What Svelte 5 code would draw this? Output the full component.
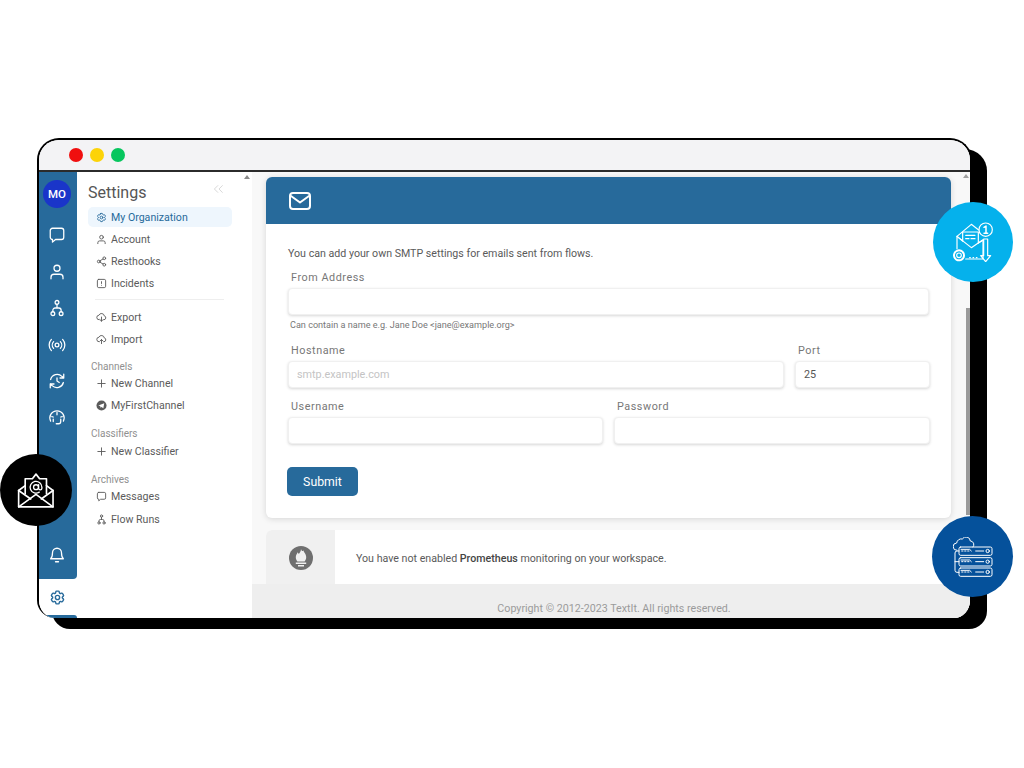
<script>
  const orgLinks = [
    { label: 'Account', icon: 'user' },
    { label: 'Resthooks', icon: 'share' },
    { label: 'Incidents', icon: 'alert' }
  ];
  const railIcons = ['chat', 'user', 'flow', 'signal', 'history', 'gauge'];
  const servers = [30, 62, 93];
</script>

{#snippet icon(name)}
  <svg viewBox="0 0 24 24" fill="none" stroke="currentColor" stroke-width="2" stroke-linecap="round" stroke-linejoin="round">
    {#if name === 'chat'}
      <path d="M6 3h12a3 3 0 0 1 3 3v9a3 3 0 0 1-3 3h-8l-4 3.500V18a3 3 0 0 1-3-3V6a3 3 0 0 1 3-3z" />
    {:else if name === 'user'}
      <circle cx="12" cy="7" r="4" /><path d="M4 21v-2a4 4 0 0 1 4-4h8a4 4 0 0 1 4 4v2" />
    {:else if name === 'flow'}
      <circle cx="12" cy="4.500" r="2.500" /><circle cx="6.500" cy="19.500" r="2.500" /><circle cx="17.500" cy="19.500" r="2.500" /><path d="M12 7v5M6.500 17v-2a3 3 0 0 1 3-3h5a3 3 0 0 1 3 3v2" />
    {:else if name === 'signal'}
      <circle cx="12" cy="12" r="2.500" /><path d="M16.500 7.500a6.500 6.500 0 0 1 0 9M7.500 16.500a6.500 6.500 0 0 1 0-9M19.500 4.500a11 11 0 0 1 0 15M4.500 19.500a11 11 0 0 1 0-15" />
    {:else if name === 'history'}
      <path d="M3.500 10A9 9 0 0 1 18.500 5.800L21 8M21 3v5h-5M20.500 14A9 9 0 0 1 5.500 18.200L3 16M3 21v-5h5" /><path d="M12 8v4l3 2" />
    {:else if name === 'gauge'}
      <path d="M3.500 17.500a9.500 9.500 0 1 1 17 0" /><path d="M12 6v3M7 12l-2-.5M17 12l2-.5M17 15v3a3 3 0 0 1-3 3h-3M7 15v3" />
    {:else if name === 'share'}
      <circle cx="18" cy="5" r="3" /><circle cx="6" cy="12" r="3" /><circle cx="18" cy="19" r="3" /><path d="M8.600 13.500l6.800 4M15.400 6.500l-6.800 4" />
    {:else if name === 'alert'}
      <rect x="3" y="3" width="18" height="18" rx="3" /><path d="M12 8v4M12 16h.01" />
    {:else if name === 'gear'}
      <path d="M9.594 3.940c.09-.542.56-.94 1.110-.94h2.593c.55 0 1.020.398 1.110.94l.213 1.281c.063.374.313.686.645.870.074.04.147.083.22.127.325.196.72.257 1.075.124l1.217-.456a1.125 1.125 0 0 1 1.370.49l1.296 2.247a1.125 1.125 0 0 1-.26 1.431l-1.003.827c-.293.241-.438.613-.43.992a7.723 7.723 0 0 1 0 .255c-.008.378.137.75.43.991l1.004.827c.424.35.534.955.26 1.430l-1.298 2.247a1.125 1.125 0 0 1-1.369.491l-1.217-.456c-.355-.133-.75-.072-1.076.124a6.470 6.470 0 0 1-.22.128c-.331.183-.581.495-.644.869l-.213 1.281c-.09.543-.56.94-1.110.94h-2.594c-.55 0-1.019-.398-1.110-.94l-.213-1.281c-.062-.374-.312-.686-.644-.870a6.520 6.520 0 0 1-.22-.127c-.325-.196-.72-.257-1.076-.124l-1.217.456a1.125 1.125 0 0 1-1.369-.49l-1.297-2.247a1.125 1.125 0 0 1 .26-1.431l1.004-.827c.292-.24.437-.613.43-.991a6.932 6.932 0 0 1 0-.255c.007-.38-.138-.751-.43-.992l-1.004-.827a1.125 1.125 0 0 1-.26-1.430l1.297-2.247a1.125 1.125 0 0 1 1.370-.491l1.216.456c.356.133.751.072 1.076-.124.072-.044.146-.086.22-.128.332-.183.582-.495.644-.869l.214-1.280z" /><circle cx="12" cy="12" r="3" />
    {:else if name === 'cloud-down'}
      <path d="M7 17a5 5 0 0 1-.5-10A6 6 0 0 1 18 8.500a4.300 4.300 0 0 1-1 8.500" /><path d="M12 11v9M8.500 16.500L12 20l3.500-3.500" />
    {:else if name === 'cloud-up'}
      <path d="M7 17a5 5 0 0 1-.5-10A6 6 0 0 1 18 8.500a4.300 4.300 0 0 1-1 8.500" /><path d="M12 21v-9M8.500 15.500L12 12l3.500 3.500" />
    {:else if name === 'plus'}
      <path d="M12 4v16M4 12h16" />
    {:else if name === 'bell'}
      <path d="M18 9a6 6 0 0 0-12 0c0 6-2.500 8-2.500 8h17S18 15 18 9z" /><path d="M10 21h4" />
    {:else if name === 'mail'}
      <rect x="2" y="4" width="20" height="16" rx="3" /><path d="M3 7l9 6.500L21 7" />
    {/if}
  </svg>
{/snippet}

{#snippet navItem(label, name)}
  <div class="nav-item">
    <span class="nav-icon">{@render icon(name)}</span>
    <span>{label}</span>
  </div>
{/snippet}

<div class="stage">
  <div class="frame">
    <div class="titlebar">
      <span class="dot red"></span>
      <span class="dot yellow"></span>
      <span class="dot green"></span>
    </div>

    <div class="body">
      <aside class="rail">
        <div class="rail-top">
          <div class="avatar">MO</div>
          {#each railIcons as name}
            <div class="rail-icon">{@render icon(name)}</div>
          {/each}
        </div>
        <div class="rail-bottom">
          <div class="rail-icon">{@render icon('bell')}</div>
        </div>
        <div class="rail-active">{@render icon('gear')}</div>
        <div class="rail-stub"></div>
      </aside>

      <nav class="menu">
        <div class="menu-head">
          <h1>Settings</h1>
          <span class="collapse">
            <svg viewBox="0 0 12 10" fill="none" stroke="currentColor" stroke-width="1">
              <path d="M5.500 1L1.500 5l4 4M10.500 1l-4 4 4 4" />
            </svg>
          </span>
        </div>
        <div class="nav-item selected">
          <span class="nav-icon">{@render icon('gear')}</span>
          <span>My Organization</span>
        </div>
        {#each orgLinks as link}
          {@render navItem(link.label, link.icon)}
        {/each}
        <div class="divider"></div>
        {@render navItem('Export', 'cloud-down')}
        {@render navItem('Import', 'cloud-up')}

        <div class="group first">Channels</div>
        {@render navItem('New Channel', 'plus')}
        <div class="nav-item">
          <span class="nav-icon">
            <svg viewBox="0 0 24 24">
              <circle cx="12" cy="12" r="11" fill="currentColor" />
              <path d="M5 12l13-5-2 11-4-3-2 2-1-4z" fill="#fff" />
            </svg>
          </span>
          <span>MyFirstChannel</span>
        </div>

        <div class="group">Classifiers</div>
        {@render navItem('New Classifier', 'plus')}

        <div class="group">Archives</div>
        {@render navItem('Messages', 'chat')}
        {@render navItem('Flow Runs', 'flow')}
      </nav>

      <div class="menu-track">
        <span class="track-arrow"></span>
      </div>

      <main class="content">
        <div class="scroll-area">
          <section class="card">
            <header class="card-head">
              <span class="head-icon">{@render icon('mail')}</span>
            </header>
            <form class="card-body">
              <p class="intro">You can add your own SMTP settings for emails sent from flows.</p>
              <div class="field">
                <label for="from">From Address</label>
                <input id="from" type="text" />
                <small>Can contain a name e.g. Jane Doe &lt;jane@example.org&gt;</small>
              </div>
              <div class="row host">
                <div class="field">
                  <label for="host">Hostname</label>
                  <input id="host" type="text" placeholder="smtp.example.com" />
                </div>
                <div class="field">
                  <label for="port">Port</label>
                  <input id="port" type="text" value="25" />
                </div>
              </div>
              <div class="row creds">
                <div class="field">
                  <label for="user">Username</label>
                  <input id="user" type="text" />
                </div>
                <div class="field">
                  <label for="pass">Password</label>
                  <input id="pass" type="password" />
                </div>
              </div>
              <button type="button">Submit</button>
            </form>
          </section>

          <section class="prom">
            <div class="prom-icon">
              <svg viewBox="0 0 24 24">
                <circle cx="12" cy="12" r="12" fill="#6f6f6f" />
                <path d="M12 3c.8 2.500 1.800 2.500 2.400 1.200.3 2 2.800 3.500 2.800 7 0 2-1 3.500-1.600 4.300H8.400C7.800 14.700 6.800 13.200 6.800 11.200c0-2.200 1.300-3.200 1.800-5 .5 1.200 1 1.800 1.600 1.300C10.800 6.500 12 5 12 3z" fill="#f0f0f0" />
                <path d="M6.800 16.500h10.400v1.600H6.800zM9 19h6v1.600H9z" fill="#f0f0f0" />
              </svg>
            </div>
            <p>You have not enabled <b>Prometheus</b> monitoring on your workspace.</p>
          </section>
        </div>
        <div class="scrollbar"><span class="bar-arrow"></span><span class="thumb"></span></div>
        <footer>Copyright © 2012-2023 TextIt. All rights reserved.</footer>
      </main>
    </div>
  </div>

  <div class="badge badge-sky">
    <svg viewBox="160 95 120 120" fill="none" stroke="#fff" stroke-width="3.500" stroke-linejoin="round" stroke-linecap="round">
      <path d="M172 175V138L215 102l22 17" />
      <path d="M172 138l17 14M250 150l-14 8" />
      <path d="M189 152V125h47v33" />
      <path d="M198 135h28M198 145h10M214 145h12" />
      <path d="M172 138l43 34 35-24v58H198" />
      <circle cx="258" cy="118" r="20" />
      <path d="M253 111l6-4v22M253 129h11" stroke-width="4.500" />
      <path d="M252 146h12v50h9l-15 18-15-18h9z" />
      <circle cx="178" cy="195" r="7" />
      <circle cx="178" cy="195" r="15" stroke-dasharray="6 3" stroke-width="6" />
      <path d="M210 202h2M220 202h2M230 202h2" />
    </svg>
  </div>

  <div class="badge badge-black">
    <svg viewBox="50 62 116 112" fill="none" stroke="#fff" stroke-width="5" stroke-linejoin="round" stroke-linecap="round">
      <path d="M55 118V168H160V118" />
      <path d="M55 118L75 103M160 118L140 103" />
      <path d="M75 128V82H97L108 68L119 82H140V128" />
      <path d="M55 118L92 144M160 118L124 144M55 168L108 130L160 168" />
      <circle cx="108" cy="108" r="7.500" stroke-width="4" />
      <path d="M116 100v11a5 5 0 0 0 10 0v-3a18 18 0 1 0-8 15" stroke-width="4" />
    </svg>
  </div>

  <div class="badge badge-navy">
    <svg viewBox="160 110 120 120" fill="none" stroke="#fff" stroke-width="3" stroke-linejoin="round" stroke-linecap="round">
      <path d="M172 150a11 11 0 0 1-1-22 14 14 0 0 1 17-12 13 13 0 0 1 24 6 11 11 0 0 1 8 18" />
      {#each servers as y}
        <rect x="178" y={110 + y} width="99" height="25" rx="5" />
        <path d="M186 {122 + y}h4M195 {122 + y}h4M204 {122 + y}h4" />
        <path d="M228 {122 + y}h24" />
        <circle cx="264" cy={122 + y} r="5" />
        <path d="M184 {110 + y + 7}h26l5 5" />
      {/each}
      <path d="M178 152h-6a6 6 0 0 0-6 6v52a6 6 0 0 0 6 6h6M166 184h12" />
    </svg>
  </div>
</div>

<style>
  :global(body) {
    background: #fff;
    font-family: "Roboto", "Liberation Sans", sans-serif;
    color: #555;
  }
  .stage {
    position: relative;
    width: 1024px;
    height: 768px;
    overflow: hidden;
    padding: 138px 0 0 37px;
    box-sizing: border-box;
  }
  .frame {
    width: 935px;
    height: 480px;
    box-sizing: border-box;
    border: 2px solid #000;
    border-bottom: 0;
    border-radius: 22px 22px 18px 18px;
    box-shadow: 15px 11px 0 #000;
    background: #fff;
    overflow: hidden;
    display: flex;
    flex-direction: column;
  }
  .titlebar {
    height: 32px;
    flex: none;
    background: #f3f3f5;
    border-bottom: 2px solid #2b2b2b;
    display: flex;
    align-items: center;
    gap: 7px;
    padding-left: 30px;
    box-sizing: border-box;
  }
  .dot { width: 14px; height: 14px; border-radius: 50%; }
  .red { background: #f00f0f; }
  .yellow { background: #fcd308; }
  .green { background: #07c65e; }

  .body {
    flex: 1;
    min-height: 0;
    display: flex;
  }
  .rail {
    width: 38px;
    flex: none;
    display: flex;
    flex-direction: column;
    color: #fff;
    background: #fff;
  }
  .rail-top {
    height: 277px;
    background: #276a9b;
    display: flex;
    flex-direction: column;
    align-items: center;
    padding: 8px 2px 0 0;
    box-sizing: border-box;
    gap: 18.400px;
  }
  .avatar {
    width: 28px;
    height: 28px;
    flex: none;
    border-radius: 50%;
    background: #1a35c9;
    font-size: 11.500px;
    font-weight: 500;
    display: flex;
    align-items: center;
    justify-content: center;
  }
  .rail-icon {
    width: 18px;
    height: 18px;
    flex: none;
  }
  .rail-icon svg, .rail-active svg { display: block; width: 100%; height: 100%; }
  .rail-icon svg { stroke-width: 1.700; }
  .rail-bottom {
    height: 130px;
    flex: none;
    background: #276a9b;
    border-bottom-right-radius: 4px;
    display: flex;
    flex-direction: column;
    justify-content: flex-end;
    align-items: center;
    padding: 0 2px 15px 0;
    box-sizing: border-box;
  }
  .rail-active {
    height: 36px;
    flex: none;
    color: #276a9b;
    display: flex;
    align-items: center;
    justify-content: center;
    padding-right: 2px;
    box-sizing: border-box;
  }
  .rail-active svg { width: 17px; height: 17px; }
  .rail-stub {
    height: 3px;
    flex: none;
    background: #276a9b;
    border-top-right-radius: 4px;
  }

  .menu {
    width: 165px;
    flex: none;
    padding: 8px 0 0 11px;
    box-sizing: border-box;
  }
  .menu-head {
    display: flex;
    justify-content: space-between;
    align-items: center;
    height: 24px;
    padding-right: 18px;
    margin-bottom: 3px;
  }
  h1 {
    margin: 0;
    font-size: 16px;
    font-weight: 400;
    color: #555;
  }
  .collapse { color: #d4d4d4; width: 11px; height: 10px; margin-top: -7px; }
  .collapse svg { display: block; width: 11px; height: 10px; }
  .nav-item {
    width: 144px;
    height: 20px;
    margin-bottom: 2.200px;
    border-radius: 5px;
    display: flex;
    align-items: center;
    box-sizing: border-box;
    padding-left: 8px;
    font-size: 10.600px;
    color: #5b5b5b;
    gap: 4px;
  }
  .nav-item.selected {
    background: #eef6fd;
    color: #276a9b;
  }
  .nav-icon { width: 11px; height: 11px; flex: none; }
  .nav-icon svg { display: block; width: 100%; height: 100%; stroke-width: 2; }
  .divider {
    width: 129px;
    height: 1px;
    background: #eee;
    margin: 5px 0 8px 7px;
  }
  .group {
    font-size: 10px;
    color: #909090;
    margin: 12.500px 0 1px 3px;
    line-height: 12px;
  }
  .group.first { margin-top: 11px; }

  .menu-track {
    width: 10px;
    flex: none;
    background: #fff;
    position: relative;
    box-shadow: 1px 0 0 #f6f6f6;
  }
  .track-arrow {
    position: absolute;
    left: 2px;
    top: 3px;
    width: 0;
    height: 0;
    border-left: 3px solid transparent;
    border-right: 3px solid transparent;
    border-bottom: 4px solid #8a8a8a;
  }

  .content {
    flex: 1;
    min-width: 0;
    background: #f8f8f8;
    position: relative;
    display: flex;
    flex-direction: column;
  }
  .scroll-area {
    flex: none;
    height: 412px;
    padding: 5px 19px 0 14px;
    box-sizing: border-box;
    overflow: hidden;
  }
  .card {
    background: #fff;
    border-radius: 6px;
    box-shadow: 0 1px 6px rgba(0, 0, 0, 0.14);
    height: 341px;
    overflow: hidden;
  }
  .card-head {
    height: 47px;
    background: #276a9b;
    display: flex;
    align-items: center;
    padding-left: 22px;
    color: #fff;
  }
  .head-icon { width: 24px; height: 24px; margin-top: 1px; }
  .head-icon svg { display: block; width: 100%; height: 100%; stroke-width: 2; }
  .card-body { padding: 22px 22px 0; }
  .intro {
    margin: 0 0 9px;
    font-size: 10.650px;
    line-height: 16px;
    color: #5a5a5a;
  }
  .field { display: flex; flex-direction: column; }
  label {
    font-size: 10.800px;
    letter-spacing: 0.55px;
    color: #777;
    line-height: 14px;
    padding-left: 3px;
    margin-bottom: 3px;
  }
  input {
    height: 27px;
    width: 100%;
    box-sizing: border-box;
    border: 1px solid #f0f0f0;
    border-radius: 4px;
    box-shadow: 0 1px 3px rgba(0, 0, 0, 0.16);
    background: #fff;
    padding: 0 8px;
    font: 10.800px "Roboto", sans-serif;
    color: #555;
    outline: none;
  }
  input::placeholder { color: #c4c4c4; opacity: 1; }
  small {
    font-size: 9.100px;
    color: #777;
    padding-left: 2px;
    margin-top: 4px;
    line-height: 12px;
  }
  .row { display: grid; gap: 11px; }
  .host { grid-template-columns: 496px 135px; margin-top: 13px; }
  .creds { grid-template-columns: 315px 316px; margin-top: 12px; }
  button {
    margin: 23px 0 0 -1px;
    width: 71px;
    height: 29px;
    border: 0;
    border-radius: 5px;
    background: #276a9b;
    color: #fff;
    font: 12.300px "Roboto", sans-serif;
    display: block;
  }
  .prom {
    margin-top: 12px;
    height: 54px;
    background: #fff;
    display: flex;
    border-top-left-radius: 6px;
  }
  .prom-icon {
    width: 69px;
    background: #f0f0f0;
    display: flex;
    align-items: center;
    justify-content: center;
    border-top-left-radius: 6px;
  }
  .prom-icon svg { width: 24px; height: 24px; margin-top: 2px; }
  .prom p {
    margin: 0;
    padding-left: 21px;
    font-size: 10.650px;
    line-height: 58px;
    color: #5a5a5a;
  }
  .prom b { font-weight: 500; color: #444; }
  .scrollbar {
    position: absolute;
    top: 0;
    right: 0;
    width: 8px;
    height: 412px;
  }
  .bar-arrow {
    position: absolute;
    left: 1px;
    top: 2px;
    width: 0;
    height: 0;
    border-left: 3px solid transparent;
    border-right: 3px solid transparent;
    border-bottom: 4px solid #a0a0a0;
  }
  .thumb {
    position: absolute;
    left: 4px;
    width: 4px;
    top: 136px;
    height: 207px;
    background: #9a9a9a;
  }
  footer {
    flex: 1;
    background: #eeeeee;
    text-align: center;
    font-size: 10.700px;
    color: #9b9b9b;
    padding: 18px 0 0 6px;
    box-sizing: border-box;
  }

  .badge {
    position: absolute;
    border-radius: 50%;
    display: flex;
    align-items: center;
    justify-content: center;
  }
  .badge-sky { left: 933px; top: 202px; width: 80px; height: 80px; background: #05b1ec; }
  .badge-sky svg { width: 40px; height: 40px; }
  .badge-black { left: 0; top: 454px; width: 72px; height: 72px; background: #000; }
  .badge-black svg { width: 38px; height: 37px; }
  .badge-navy { left: 932px; top: 516px; width: 81px; height: 81px; background: #05519b; }
  .badge-navy svg { width: 40px; height: 40px; }
</style>
